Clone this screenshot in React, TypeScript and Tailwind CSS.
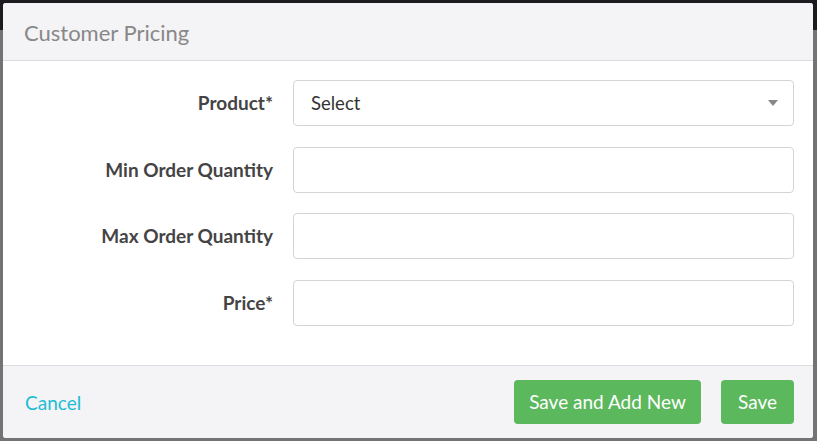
import React from "react";

const fields = [
  { label: "Product*", select: true },
  { label: "Min Order Quantity" },
  { label: "Max Order Quantity" },
  { label: "Price*" },
];

export default function App() {
  return (
    <div
      className="relative h-[441px] w-[817px] overflow-hidden bg-[#737373]"
      style={{ fontFamily: "Lato, 'Open Sans', sans-serif" }}
    >
      <div className="absolute left-0 right-0 top-0 h-[30px] bg-[#1c1c20]" />
      <div className="absolute left-[3px] top-[3px] flex h-[435px] w-[810px] flex-col overflow-hidden rounded-[3px] bg-white">
        <div className="flex h-[58px] items-center border-b border-[#dcdbe0] bg-[#f4f3f6] px-[21px]">
          <h2 className="pt-[1px] text-[22px] text-[#888888]">Customer Pricing</h2>
        </div>
        <div className="flex flex-1 flex-col gap-[20.5px] pt-[19px]">
          {fields.map((f) => (
            <div key={f.label} className="flex items-center">
              <label className="w-[270px] pt-[1px] text-right text-[19px] font-bold text-[#444444]">
                {f.label}
              </label>
              <div className="ml-[20px] flex h-[46px] w-[501px] items-center justify-between rounded-[4px] border border-[#d4d4d8] bg-white px-[17px]">
                {f.select && (
                  <>
                    <span className="pt-[1px] text-[18.5px] text-[#333333]">Select</span>
                    <svg width="10" height="6" viewBox="0 0 10 6" className="mr-[-2px]">
                      <path d="M0 0h10L5 6z" fill="#888888" />
                    </svg>
                  </>
                )}
              </div>
            </div>
          ))}
        </div>
        <div className="flex h-[73px] items-center justify-between border-t border-[#dcdbe0] bg-[#f4f3f6] pl-[22px] pr-[19px]">
          <button className="pt-[2px] text-[19px] text-[#1dbdd4]">Cancel</button>
          <div className="flex gap-[20px]">
            <button className="h-[44px] w-[187px] rounded-[4px] bg-[#5cb85c] pt-[1px] text-[19px] text-white">
              Save and Add New
            </button>
            <button className="h-[44px] w-[73px] rounded-[4px] bg-[#5cb85c] pt-[1px] text-[19px] text-white">
              Save
            </button>
          </div>
        </div>
      </div>
    </div>
  );
}
